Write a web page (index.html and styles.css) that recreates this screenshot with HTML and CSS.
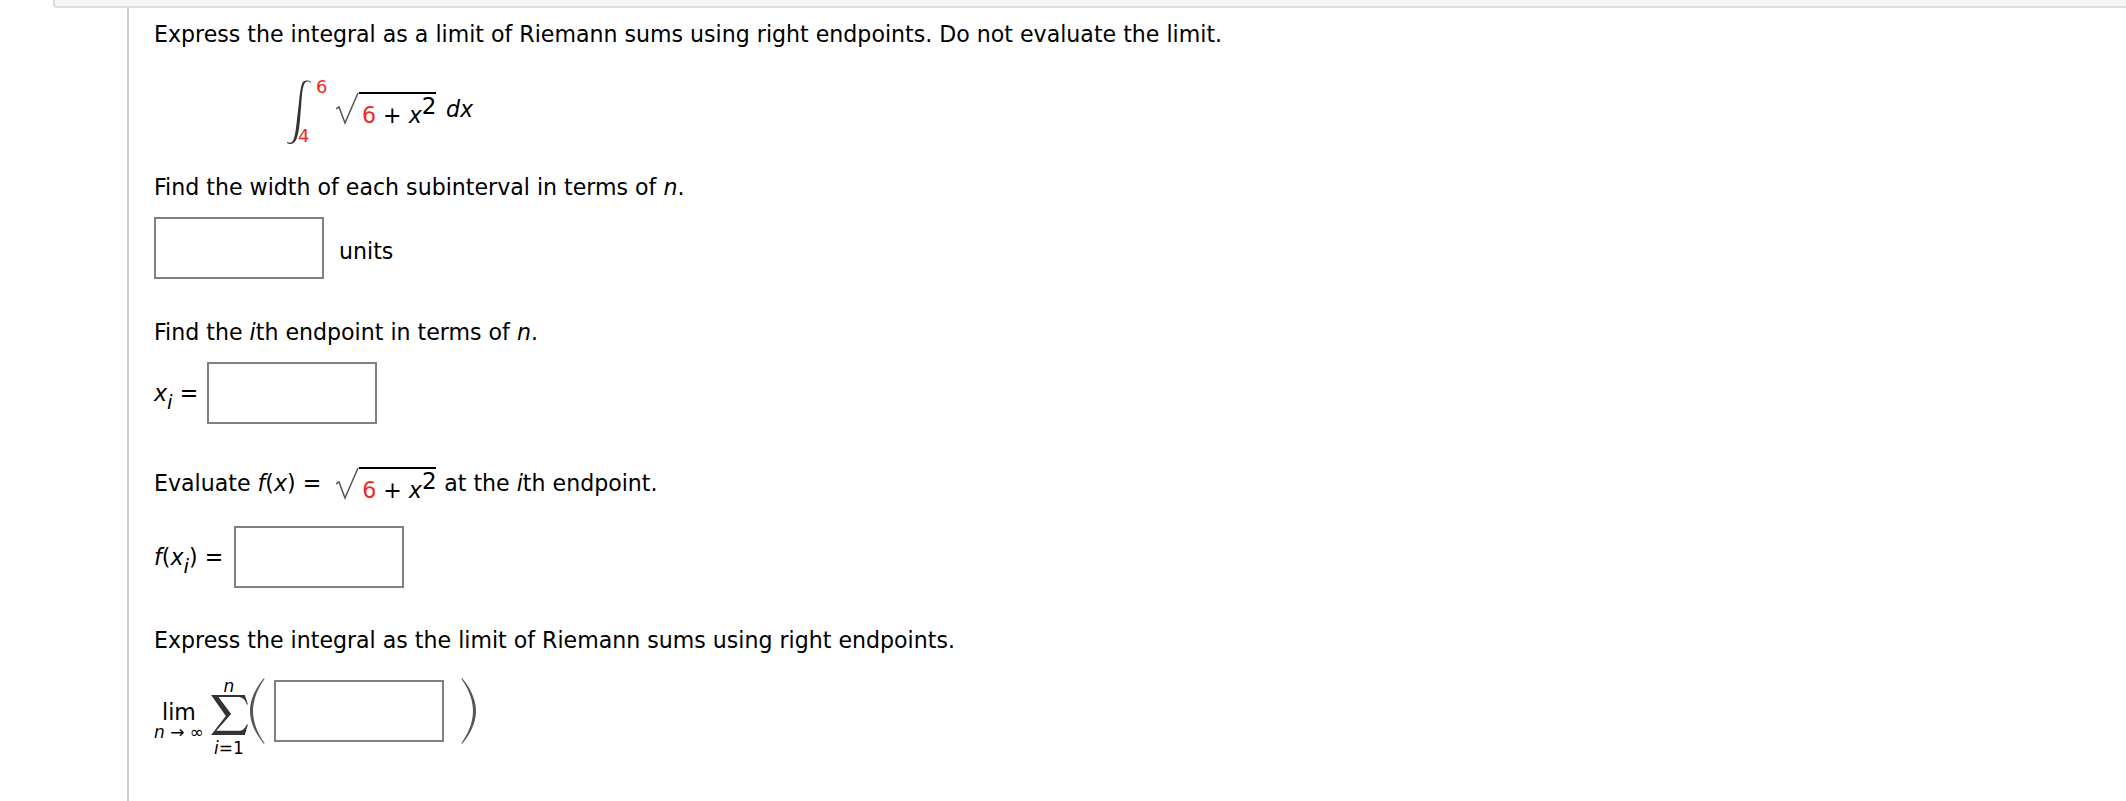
FILE: index.html
```html
<!DOCTYPE html>
<html lang="en">
<head>
    <meta charset="UTF-8">
    <title>Riemann sums</title>
    <link rel="stylesheet" href="styles.css">
</head>
<body>
    <div class="top-bar"></div>
    <div class="question">
        <p class="line">Express the integral as a limit of Riemann sums using right endpoints. Do not evaluate the limit.</p>

        <div class="math integral-row">
            <span class="integral">
                <svg width="26" height="64" viewBox="0 0 26 64"><path d="M25 2C23 0 19 0 17 2C15 5 14 12 13 22L10 48C9 55 8 60 6 62C5 63 3 63 1 62V63C4 65 8 64 10 60C12 56 13 50 14 40L16 14C17 7 18 3 20 2C22 1 24 2 25 3Z" fill="#333"/></svg>
                <span class="limit upper">6</span>
                <span class="limit lower">4</span>
            </span>
            <span class="root">
                <svg class="root-sign" width="23" height="33" viewBox="0 0 23 33"><path d="M0 17l3-2 6 16L22 1" fill="none" stroke="#555" stroke-width="1.5"/></svg>
                <span class="radicand"><span class="red">6</span> + <i>x</i><sup>2</sup></span>
            </span>
            <i class="dx">dx</i>
        </div>

        <p class="line width-label">Find the width of each subinterval in terms of <i>n</i>.</p>
        <div class="answer-row first-answer">
            <span class="box"></span>
            <span class="units">units</span>
        </div>

        <p class="line endpoint-label">Find the <i>i</i>th endpoint in terms of <i>n</i>.</p>
        <div class="answer-row xi-row">
            <span class="lhs xi-lhs"><i>x</i><sub><i>i</i></sub>&nbsp;=</span>
            <span class="box"></span>
        </div>

        <div class="math evaluate-row">
            <span>Evaluate <i>f</i>(<i>x</i>)&nbsp;=</span>
            <span class="root">
                <svg class="root-sign" width="23" height="33" viewBox="0 0 23 33"><path d="M0 17l3-2 6 16L22 1" fill="none" stroke="#555" stroke-width="1.5"/></svg>
                <span class="radicand"><span class="red">6</span> + <i>x</i><sup>2</sup></span>
            </span>
            <span class="after-root">at the <i>i</i>th endpoint.</span>
        </div>
        <div class="answer-row fxi-row">
            <span class="lhs fxi-lhs"><i>f</i>(<i>x</i><sub><i>i</i></sub>)&nbsp;=</span>
            <span class="box"></span>
        </div>

        <p class="line limit-label">Express the integral as the limit of Riemann sums using right endpoints.</p>
        <div class="sum-row">
            <span class="lim">lim<small><i>n</i> → ∞</small></span>
            <span class="sum">
                <i class="sum-top">n</i>
                <svg width="38" height="40" viewBox="0 0 36 38"><path d="M1 0H33L36 9H35C33 4 31 2 26 2H8L20 18L6 34H27C31 34 33 32 35 28H36L33 38H1L15 20Z" fill="#333"/></svg>
                <span class="sum-bottom"><i>i</i>=1</span>
            </span>
            <svg class="paren" width="15" height="66" viewBox="0 0 15 66"><path d="M14 0C3 13 0 25 0 33C0 41 3 53 14 66L14.500 65C6 53 3 42 3 33C3 24 6 13 14.500 1Z" fill="#555"/></svg>
            <span class="box"></span>
            <svg class="paren close" width="15" height="66" viewBox="0 0 15 66"><path d="M1 0C12 13 15 25 15 33C15 41 12 53 1 66L.5 65C9 53 12 42 12 33C12 24 9 13 .5 1Z" fill="#555"/></svg>
        </div>
    </div>
</body>
</html>
```

FILE: styles.css
```css
* {
    margin: 0;
    padding: 0;
    box-sizing: border-box;
}
html, body {
    height: 100%;
    overflow: hidden;
}
body {
    background-color: #fff;
    color: #000;
    font-family: "DejaVu Sans", sans-serif;
    font-size: 22.1px;
    line-height: 24px;
}
.top-bar {
    height: 8px;
    margin-left: 53px;
    background-color: #f5f5f5;
    border: 2px solid #ddd;
    border-top: none;
    border-right: none;
    border-bottom-left-radius: 4px;
}
.question {
    margin-left: 127px;
    height: 793px;
    padding: 14px 0 0 25px;
    border-left: 2px solid #ccc;
}
.red {
    color: #f0281e;
}
.math {
    display: flex;
    align-items: center;
}
.integral-row {
    margin: 29px 0 0 132px;
    height: 67px;
}
.integral {
    position: relative;
    width: 50px;
    height: 64px;
    margin-top: 6px;
}
.limit {
    position: absolute;
    color: #f0281e;
    font-size: 18px;
}
.upper {
    left: 30px;
    top: -5px;
}
.lower {
    left: 12px;
    top: 44px;
}
.root {
    display: inline-flex;
    align-items: flex-start;
    height: 33px;
}
.radicand {
    border-top: 2px solid #000;
    padding: 9px 0 0 3px;
    height: 33px;
    width: 77px;
    white-space: nowrap;
}
.radicand sup {
    font-size: 23px;
    line-height: 0;
    vertical-align: 9px;
}
.dx {
    margin-left: 10px;
}
.width-label {
    margin-top: 33px;
}
.answer-row {
    display: flex;
    align-items: center;
}
.first-answer {
    margin-top: 18px;
}
.box {
    display: block;
    width: 170px;
    height: 62px;
    border: 2px solid #808080;
    background-color: #fff;
}
.units {
    margin: 5px 0 0 15px;
}
.endpoint-label {
    margin-top: 41px;
}
.xi-row {
    margin-top: 18px;
}
.xi-lhs {
    margin-right: 9px;
}
.fxi-lhs {
    margin-right: 11px;
}
sub {
    font-size: 20px;
    line-height: 0;
    vertical-align: -8px;
}
.evaluate-row {
    margin-top: 41px;
    height: 36px;
}
.evaluate-row .root {
    margin-left: 15px;
}
.after-root {
    margin-left: 8px;
}
.fxi-row {
    margin-top: 25px;
}
.limit-label {
    margin-top: 40px;
}
.sum-row {
    display: flex;
    align-items: center;
    margin-top: 23px;
    height: 72px;
}
.lim {
    display: flex;
    flex-direction: column;
    align-items: center;
    margin-top: 18px;
}
.lim small {
    font-size: 17px;
    line-height: 16px;
}
.sum {
    display: flex;
    flex-direction: column;
    align-items: center;
    margin: 12px 0 0 6px;
    font-size: 17px;
    line-height: 18px;
}
.sum-bottom {
    margin-top: 3px;
    line-height: 20px;
}
.paren {
    margin: 0 9px 0 2px;
}
.paren.close {
    margin: 0 0 0 17px;
}
```
